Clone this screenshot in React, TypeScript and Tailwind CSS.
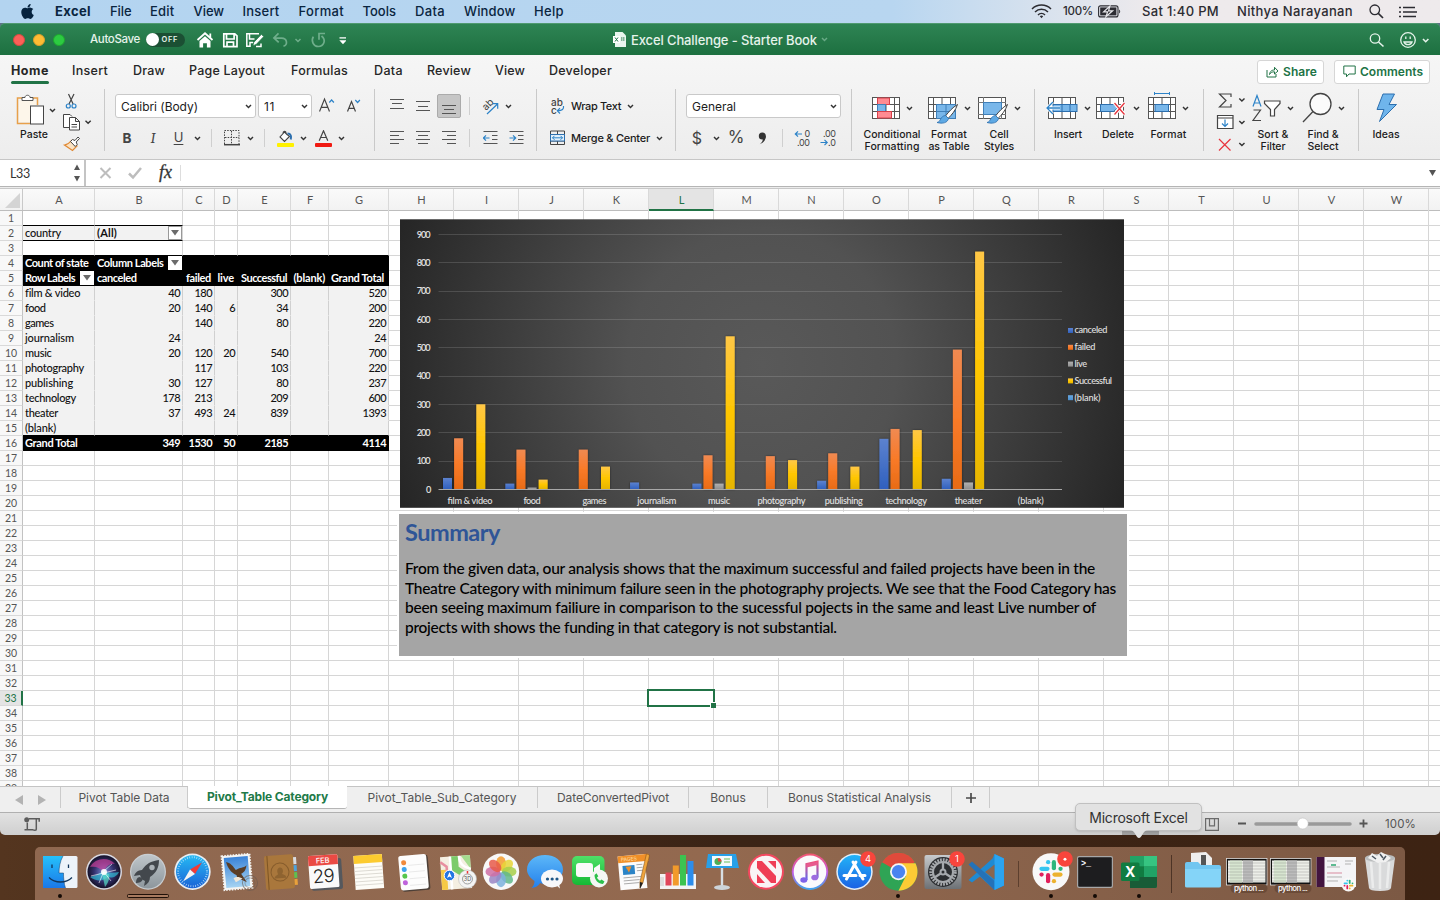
import { useLayoutEffect, useRef, useState, type ReactNode } from "react";
import { FaApple } from "react-icons/fa";

/* Text run tracked so that it fills a given width. */
function T({ w, className = "", children }: { w: number; className?: string; children: string }) {
  const ref = useRef<HTMLSpanElement>(null);
  const [ls, setLs] = useState(0);
  useLayoutEffect(() => {
    const el = ref.current;
    if (!el) return;
    el.style.letterSpacing = "0px";
    const next = (w - el.getBoundingClientRect().width) / children.length;
    el.style.letterSpacing = next + "px";
    setLs(next);
  }, [w, children]);
  return (
    <span ref={ref} className={"inline-block w-fit shrink-0 whitespace-pre " + className} style={{ letterSpacing: ls + "px" }}>
      {children}
    </span>
  );
}

const Chev = ({ className = "text-[#333]" }: { className?: string }) => (
  <svg className={"shrink-0 " + className} width="7" height="5" viewBox="0 0 7 5">
    <path d="M1 1l2.5 2.6L6 1" fill="none" stroke="currentColor" strokeWidth="1.4" />
  </svg>
);

const Slot = ({ className, children }: { className: string; children?: ReactNode }) => (
  <div className={"flex h-full shrink-0 items-center justify-center " + className}>{children}</div>
);

const Sep = () => <div className="mt-[3px] h-[62px] w-px shrink-0 bg-[#c9c9c9]" />;
const MiniSep = () => <div className="h-[18px] w-px shrink-0 bg-[#cfcfcf]" />;

/* ---------- Menu bar ---------- */
const menus: [string, number, string][] = [
  ["File", 21.5, "ml-[19px]"],
  ["Edit", 24.5, "ml-[18.5px]"],
  ["View", 30.5, "ml-[19px]"],
  ["Insert", 37, "ml-[18.5px]"],
  ["Format", 45.5, "ml-[19px]"],
  ["Tools", 33.5, "ml-[18.5px]"],
  ["Data", 30, "ml-[19px]"],
  ["Window", 51.5, "ml-[19px]"],
  ["Help", 30, "ml-[18.5px]"],
];

function MenuBar() {
  return (
    <div className="flex h-[23px] shrink-0 items-center bg-linear-to-r from-[#b3d4f0] via-[#b8d6f0] via-62% to-[#eeeaec] to-80% text-[13px] font-medium text-[#0a2540]">
      <FaApple className="mb-px ml-[19px] size-[17px] text-[#06233f]" />
      <T w={36} className="ml-[19px] font-bold">Excel</T>
      {menus.map(([m, w, c]) => (
        <T key={m} w={w} className={c}>{m}</T>
      ))}
      <div className="ml-auto flex items-center text-[#2c2c32]">
        <svg width="21" height="15" viewBox="0 0 21 15" fill="none" stroke="currentColor" strokeWidth="1.5">
          <path d="M1 5a13.5 13.5 0 0 1 19 0M4 8a9.3 9.3 0 0 1 13 0M7 11a5 5 0 0 1 7 0" />
          <path d="M8.8 12.2a2.5 2.5 0 0 1 3.4 0L10.5 14.2z" fill="currentColor" stroke="none" />
        </svg>
        <T w={30} className="ml-[11px] text-[11.5px]">100%</T>
        <svg className="ml-[5px]" width="23" height="13" viewBox="0 0 23 13">
          <rect x=".6" y=".9" width="19.4" height="11" rx="2" fill="none" stroke="currentColor" strokeWidth="1.1" />
          <rect x="2.2" y="2.4" width="16.2" height="8" fill="currentColor" />
          <path d="M21.2 4.4c1.3.6 1.3 3.4 0 4z" fill="currentColor" />
          <path d="M11.8 1.2L5.6 6.9h4l-1.6 4.7 6.6-5.8h-4z" fill="currentColor" stroke="#e8e8ec" strokeWidth="1.2" />
        </svg>
        <T w={77} className="ml-[21px]">Sat 1:40 PM</T>
        <T w={116} className="ml-[18px]">Nithya Narayanan</T>
        <svg className="ml-[16px]" width="15" height="15" viewBox="0 0 15 15" fill="none" stroke="currentColor" strokeWidth="1.3">
          <circle cx="5.8" cy="5.8" r="4.8" /><path d="M9.3 9.3l4.7 4.7" strokeWidth="1.7" />
        </svg>
        <svg className="mr-[23px] ml-[15px]" width="18" height="12" viewBox="0 0 18 12" stroke="currentColor" strokeWidth="1.7">
          <path d="M4 1.5h12M4 6h14M4 10.5h13M0 1.5h2M0 6h2M0 10.5h2" />
        </svg>
      </div>
    </div>
  );
}

/* ---------- Title bar ---------- */
function TitleBar() {
  return (
    <div className="flex h-8 shrink-0 items-center rounded-t-[5px] border-t border-[#4f9a70] bg-linear-to-b from-[#2e8454] to-[#1d7040] text-[#e6f3eb]">
      <div className="ml-[13px] flex gap-2">
        <i className="size-3 rounded-full border border-[#d9483f] bg-[#fc6058]" />
        <i className="size-3 rounded-full border border-[#dc9e2a] bg-[#fdbc34]" />
        <i className="size-3 rounded-full border border-[#1fa72f] bg-[#2ccb41]" />
      </div>
      <T w={50} className="ml-[25px] text-[11.5px] font-medium">AutoSave</T>
      <div className="ml-[6px] flex h-[14px] w-[39px] items-center rounded-full bg-[#1b4f33]">
        <span className="size-[12.5px] rounded-full bg-white" />
        <T w={16.5} className="ml-[3px] text-[7.5px] font-semibold">OFF</T>
      </div>
      <svg className="ml-[11px]" width="150" height="20" viewBox="196 29.500 150 20" fill="none" stroke="#fff" strokeWidth="1.5">
        <path d="M197.5 39.5l7.5-6.7 7.5 6.7M210.3 33v4" strokeWidth="1.8" />
        <path d="M199.5 40.6l5.5-4.8 5.5 4.8V47h-3.6v-4.3h-3.8V47h-3.6z" fill="#fff" stroke="none" />
        <path d="M223.8 33.3h11l2.2 2v10.9h-13.2zM226.5 33.5v5h7.6v-5M227 46v-4.3h6.5V46" strokeWidth="1.7" />
        <path d="M259 33.3h-12.2v12.4h4M249.5 33.5v5h5M250 46v-4h3M256 46h5v-3" strokeWidth="1.5" />
        <path d="M252.8 45.2l1-3.4 7.6-8 2.4 2.3-7.7 8z" fill="#fff" stroke="#25794a" strokeWidth=".8" />
        <g stroke="#6fae8b">
          <path d="M278.500 32.800l-4.600 4.700 4.800 4.300M274.300 37.600h7.300c6 0 6.300 7.400 1.900 8" strokeWidth="1.700" />
          <path d="M295.500 38.400l2.500 2.600 2.500-2.600" />
          <path d="M325 33h-6v6.300M313.300 36.200c-2.500 4.500.3 9.800 5 9.800 5.500 0 8.300-6.300 3.200-10.500" strokeWidth="1.700" />
        </g>
        <path d="M339.500 37.400h7" strokeWidth="1.300" />
        <path d="M339.300 39.800h7.400l-3.700 4z" fill="#fff" stroke="none" />
      </svg>
      <svg className="ml-[267px]" width="14" height="16" viewBox="0 0 14 16">
        <path d="M2 0h7.500L13 3.500V15H2z" fill="#e9f5ee" />
        <rect x="0" y="4" width="7" height="7" fill="#fff" />
        <path d="M2 5.500l3 4M5 5.500l-3 4M8 6h1.500M10 6h1.500M8 8h1.500M10 8h1.500" stroke="#217346" strokeWidth="1" />
      </svg>
      <T w={186} className="mt-[2px] ml-[4px] text-[13px] font-medium">Excel Challenge - Starter Book</T>
      <Chev className="ml-[4px] text-[#69aa86]" />
      <svg className="mr-[10px] ml-auto" width="62" height="18" viewBox="1368 30 62 18" fill="none" stroke="#e6f3eb" strokeWidth="1.300">
        <circle cx="1375" cy="37.500" r="4.700" /><path d="M1378.500 41l5 4.500" strokeWidth="1.600" />
        <circle cx="1408" cy="39" r="7.300" />
        <path d="M1404 41c1 3.500 7 3.500 8 0z M1405.800 35.500v2.500M1410.200 35.500v2.500" />
        <path d="M1423 38l2.700 2.700 2.700-2.700" strokeWidth="1.600" />
      </svg>
    </div>
  );
}

/* ---------- Ribbon ---------- */
const ribbonTabs: [string, number, string][] = [
  ["Insert", 36, "ml-[23px]"],
  ["Draw", 32, "ml-[25px]"],
  ["Page Layout", 76, "ml-[24px]"],
  ["Formulas", 57, "ml-[26px]"],
  ["Data", 29, "ml-[26px]"],
  ["Review", 44, "ml-[24px]"],
  ["View", 30, "ml-[24px]"],
  ["Developer", 63, "ml-[24px]"],
];

function RibbonTabs() {
  return (
    <div className="flex h-[31px] shrink-0 items-center pt-[2px] pl-[11px] text-[12.5px] font-medium text-[#262626]">
      <div className="relative">
        <T w={38} className="font-bold">Home</T>
        <span className="absolute top-[19px] left-0 h-[3px] w-[38px] rounded-full bg-[#217346]" />
      </div>
      {ribbonTabs.map(([t, w, c]) => (
        <T key={t} w={w} className={c}>{t}</T>
      ))}
      <div className="ml-auto flex gap-[10px] pr-[10px] text-[12px] font-semibold text-[#217346]">
        <div className="flex h-6 w-[67px] items-center rounded-[3px] border border-[#d6d6d6] bg-white pl-[8px]">
          <svg width="13" height="12" viewBox="0 0 13 12" fill="none" stroke="currentColor">
            <path d="M1 4v7h9V8M3.500 8.500C4 5 6 4 8.500 4V1.300L12 5 8.500 8V5.800C6 5.800 4.800 6.500 3.500 8.500z" />
          </svg>
          <T w={34} className="ml-[4px]">Share</T>
        </div>
        <div className="flex h-6 w-[96px] items-center rounded-[3px] border border-[#d6d6d6] bg-white pl-[8px]">
          <svg width="13" height="13" viewBox="0 0 13 13" fill="none" stroke="currentColor">
            <path d="M.8 1h11.400v8H6l-2.500 2.800V9H.8z" />
          </svg>
          <T w={63} className="ml-[4px]">Comments</T>
        </div>
      </div>
    </div>
  );
}

const Lines = ({ l, className = "" }: { l: [number, number, number][]; className?: string }) => (
  <svg className={className} width="14" height="16" viewBox="0 0 14 16" stroke="#555" strokeWidth="1" shapeRendering="crispEdges">
    {l.map(([a, b, y]) => <path key={y} d={`M${a} ${y + 0.5}H${b}`} />)}
  </svg>
);

function Big({ className, icon, lines, chev = true }: { className: string; icon: ReactNode; lines: [string, number][]; chev?: boolean }) {
  return (
    <div className={"flex shrink-0 flex-col items-center " + className}>
      <div className="flex h-[43px] items-center gap-[6px] pt-px">
        {icon}
        {chev && <Chev className="mt-px text-[#333]" />}
      </div>
      {lines.map(([s, w]) => (
        <T key={s} w={w} className="h-3 text-[10.500px] leading-[12px] font-medium text-[#1c1c1c]">{s}</T>
      ))}
    </div>
  );
}

const GridBase = () => (
  <g fill="#fff" stroke="#555" strokeWidth="1">
    <rect x=".5" y="5.500" width="27" height="21" />
    <path d="M0 12.500h28M0 19.500h28M5.500 5v22M14 5v22M22.500 5v22" />
  </g>
);
const Brush = () => (
  <g>
    <path d="M29.500 12.500c-5 3-9 7.500-12 11.500l2.500 2.500c4-4 7.500-8 9.500-14z" fill="#fff" stroke="#444" />
    <path d="M17.500 23.500l3 3c-1 4.500-6 5.500-11.500 4 4-.5 3-6.500 8.500-7z" fill="#5ea9e4" stroke="#2d6fae" strokeWidth=".8" />
  </g>
);

function Ribbon() {
  return (
    <div className="flex h-[74px] shrink-0 items-start border-b border-[#c6c6c6]">
      {/* clipboard */}
      <div className="flex w-[104px] shrink-0">
        <div className="ml-[16px] flex w-[44px] flex-col">
          <div className="flex h-[43px] items-center gap-[2px] pt-[5px]">
            <svg width="31" height="32" viewBox="0 0 31 32">
              <path d="M6 4H1.500v25.500H14M17 4h4.500v7" fill="none" stroke="#e8a04a" strokeWidth="1.500" />
              <path d="M3 6.500h17V11h-6v17H3z" fill="#fdf6ea" />
              <path d="M6 6.500V3.500h3C9 .5 14 .5 14 3.500h3v3z" fill="#fff" stroke="#555" />
              <rect x="14.500" y="12" width="13" height="18" fill="#fff" stroke="#444" />
            </svg>
            <Chev />
          </div>
          <T w={28} className="ml-[4px] text-[10.500px] leading-[12px] font-medium text-[#1c1c1c]">Paste</T>
        </div>
        <svg className="mt-[6px]" width="34" height="62" viewBox="60 92 34 62" fill="none">
          <path d="M68.500 94l4.600 10M74 94l-5 10" stroke="#444" strokeWidth="1.200" />
          <circle cx="68.300" cy="106" r="2" stroke="#2d83c8" strokeWidth="1.200" />
          <circle cx="74" cy="106" r="2" stroke="#2d83c8" strokeWidth="1.200" />
          <g stroke="#444" fill="#fff">
            <path d="M69.500 127.500h-6v-13h6.500l2 2" /><path d="M69.500 117.500h6l4 4v8.500h-10zM75.500 117.500v4h4M71.500 124.500h5.500M71.500 127h5.500" />
          </g>
          <path d="M85.500 120.700l2.600 2.600 2.600-2.600" stroke="#333" strokeWidth="1.400" />
          <path d="M71.500 140.500l5.500 5.500-4.500 4.500-8-5.500c3-.5 5-2 7-4.500z" fill="#fbe3c3" stroke="#e08a35" strokeWidth="1.200" />
          <path d="M70.500 141.500l2-2 2.500 1 3-3.500 1.500 1.500-3.300 3.500 1 2.500-2 2z" fill="#fff" stroke="#444" />
        </svg>
      </div>
      <Sep />
      {/* font */}
      <div className="flex w-[269px] shrink-0 flex-col pt-[8px] pl-[10px]">
        <div className="flex h-6 items-center text-[12px] text-[#1c1c1c]">
          <div className="flex h-6 w-[141px] items-center justify-between rounded-[3px] border border-[#c9c9c9] bg-white pt-px pr-[3px] pl-[5px]">
            <T w={77}>Calibri (Body)</T><Chev />
          </div>
          <div className="ml-[2px] flex h-6 w-[54px] items-center justify-between rounded-[3px] border border-[#c9c9c9] bg-white pt-px pr-[3px] pl-[5px]">
            <T w={11}>11</T><Chev />
          </div>
          <svg className="ml-[7px]" width="44" height="18" viewBox="319 96 44 18" fill="none" stroke="#444" strokeWidth="1.200">
            <path d="M319.500 110.500l5-12.500 5 12.500M321.300 106.300h6.400" /><path d="M329.300 101.500l2.300-2.500 2.300 2.500" stroke="#2d83c8" />
            <path d="M347.500 110.500l4-10 4 10M349 107.300h5.200" /><path d="M355.300 99l2.300 2.500 2.300-2.500" stroke="#2d83c8" />
          </svg>
        </div>
        <div className="mt-[8px] flex h-6 items-center text-[14px] text-[#444]">
          <Slot className="w-[24px] text-[13.500px] font-bold">B</Slot>
          <Slot className="w-[28px] font-serif text-[15px] italic">I</Slot>
          <Slot className="w-[23px] text-[13px] underline underline-offset-2">U</Slot>
          <Slot className="w-[14px]"><Chev /></Slot>
          <Slot className="w-[14px]"><MiniSep /></Slot>
          <Slot className="w-[27px]">
            <svg width="16" height="16" viewBox="0 0 16 16" fill="none" stroke="#444">
              <path d="M.5 14V.5h14.500V14M7.500 1v13M1 7.500h14" strokeDasharray="1.500 1.200" /><path d="M0 14.700h16" strokeWidth="1.500" />
            </svg>
          </Slot>
          <Slot className="w-[11px]"><Chev /></Slot>
          <Slot className="w-[17px]"><MiniSep /></Slot>
          <Slot className="w-[24px]">
            <svg width="17" height="17" viewBox="0 0 17 17" fill="none">
              <path d="M7.500 2L3 7l4.500 4.500 5-5zM7.500 2l3 3M6 3.500c0-3 3-3 3-.5" stroke="#444" strokeWidth="1.100" fill="#fff" />
              <path d="M10.500 3.500c3.500 0 4 3 3.200 6" stroke="#2d6fae" strokeWidth="2" />
              <rect x="0" y="13" width="17" height="4" rx="1" fill="#fff100" />
            </svg>
          </Slot>
          <Slot className="w-[12px]"><Chev /></Slot>
          <Slot className="w-[28px]">
            <svg width="17" height="17" viewBox="0 0 17 17" fill="none">
              <path d="M4.200 10.800L8.500.8l4.300 10M5.600 7.500h5.800" stroke="#444" strokeWidth="1.200" /><rect x="0" y="13" width="17" height="4" rx="1" fill="#f01a12" />
            </svg>
          </Slot>
          <Slot className="w-[9px]"><Chev /></Slot>
        </div>
      </div>
      <Sep />
      {/* alignment */}
      <div className="flex w-[161px] shrink-0 flex-col pt-[8px] pl-[10px]">
        <div className="flex h-6 items-center">
          <Slot className="w-[24px]"><Lines l={[[0, 14, 2], [2, 12, 6], [0, 14, 11]]} className="mb-[2px]" /></Slot>
          <Slot className="w-[28px]"><Lines l={[[0, 14, 3], [2, 12, 8], [0, 14, 12]]} /></Slot>
          <Slot className="w-[24px] rounded-[2px] border border-[#ababab] bg-[#c6c6c6]"><Lines l={[[0, 14, 4], [2, 12, 8], [0, 14, 12]]} className="mt-[5px]" /></Slot>
          <Slot className="w-[16px]"><MiniSep /></Slot>
          <Slot className="w-[25px]">
            <svg width="16" height="18" viewBox="482 96 16 18" fill="none" className="overflow-visible">
              <text x="482" y="107.500" fontSize="10" fontFamily="Inter" fill="#444" transform="rotate(-45 487 104)">ab</text>
              <path d="M487 113L497.500 103M492.500 102.700h5.200v5" stroke="#2d83c8" strokeWidth="1.200" />
            </svg>
          </Slot>
          <Slot className="w-[12px]"><Chev /></Slot>
        </div>
        <div className="mt-[8px] flex h-6 items-center">
          <Slot className="w-[24px]"><Lines l={[[0, 14, 1], [0, 9, 5], [0, 14, 9], [0, 9, 13]]} /></Slot>
          <Slot className="w-[28px]"><Lines l={[[0, 14, 1], [2, 12, 5], [0, 14, 9], [2, 12, 13]]} /></Slot>
          <Slot className="w-[24px]"><Lines l={[[0, 14, 1], [5, 14, 5], [0, 14, 9], [5, 14, 13]]} /></Slot>
          <Slot className="w-[16px]"><MiniSep /></Slot>
          {["M6 8H0M2.500 5.300L-.2 8l2.700 2.700", "M0 8h6M3.500 5.300L6.200 8l-2.700 2.700"].map((d) => (
            <Slot key={d} className="w-[26px]">
              <svg width="15" height="16" viewBox="-.5 0 15 16" fill="none" stroke="#555">
                <path d="M0 1.500h14M8.500 5.500H14M8.500 9.500H14M0 13.500h14" /><path d={d} stroke="#2d83c8" strokeWidth="1.200" />
              </svg>
            </Slot>
          ))}
        </div>
      </div>
      <Sep />
      {/* wrap / merge */}
      <div className="flex w-[138px] shrink-0 flex-col pt-[8px] pl-[13px] text-[11px] font-medium text-[#1c1c1c]">
        <div className="flex h-6 items-center">
          <svg width="15" height="18" viewBox="0 0 15 18" fill="none" className="overflow-visible">
            <text x="1" y="8.500" fontSize="10" fontFamily="Inter" fill="#444" textLength="12">ab</text>
            <text x="1" y="17" fontSize="10" fontFamily="Inter" fill="#444">c</text>
            <path d="M13.500 9c.5 3-1 4.800-6 4.800M10 11.100l-2.700 2.700L10 16.500" stroke="#2d83c8" strokeWidth="1.200" />
          </svg>
          <T w={50} className="mt-px ml-[6px]">Wrap Text</T>
          <Chev className="ml-[6px] text-[#333]" />
        </div>
        <div className="mt-[8px] flex h-6 items-center">
          <svg width="15" height="16" viewBox="0 0 15 16" fill="none">
            <path d="M.5 1h14v13.500H.5zM0 4.500h15M0 11h15M7.500 1v3M7.500 11v3" stroke="#444" />
            <rect x=".5" y="4.500" width="14" height="6.500" fill="#e2f0fb" stroke="#2d6fae" />
            <path d="M2.500 7.800h10M4.500 5.800l-2 2 2 2M10.500 5.800l2 2-2 2" stroke="#2d83c8" />
          </svg>
          <T w={79} className="mt-px ml-[6px]">Merge &amp; Center</T>
          <Chev className="ml-[6px] text-[#333]" />
        </div>
      </div>
      <Sep />
      {/* number */}
      <div className="flex w-[175px] shrink-0 flex-col pt-[8px] pl-[10px]">
        <div className="flex h-6 w-[155px] items-center justify-between rounded-[3px] border border-[#c9c9c9] bg-white pt-px pr-[3px] pl-[5px] text-[12px] text-[#1c1c1c]">
          <T w={44}>General</T><Chev />
        </div>
        <div className="mt-[8px] flex h-6 items-center text-[16px] text-[#444]">
          <Slot className="w-[22px]">$</Slot>
          <Slot className="w-[16px]"><Chev /></Slot>
          <Slot className="w-[24px] text-[17px]">%</Slot>
          <Slot className="w-[28px]">
            <svg width="9" height="13" viewBox="0 0 9 13"><circle cx="4.300" cy="3.900" r="3.500" fill="#333" /><path d="M7.800 3.500c.3 4-2 7.300-6 8.700 2.500-2.200 3-3.500 3-5.500z" fill="#333" /></svg>
          </Slot>
          <Slot className="w-[13px]"><MiniSep /></Slot>
          <Slot className="w-[27px]">
            <svg width="17" height="18" viewBox="0 0 17 18" fontSize="9" fontFamily="Inter" fill="#444" className="overflow-visible">
              <text x="10.500" y="8">0</text><text x="3" y="16.500" textLength="13">.00</text>
              <path d="M8 5H1.500M4 2.300L1.300 5 4 7.700" fill="none" stroke="#2d83c8" strokeWidth="1.200" />
            </svg>
          </Slot>
          <Slot className="w-[25px]">
            <svg width="17" height="18" viewBox="0 0 17 18" fontSize="9" fontFamily="Inter" fill="#444" className="overflow-visible">
              <text x="3" y="8" textLength="13">.00</text><text x="8" y="16.500" textLength="8">.0</text>
              <path d="M.5 13.500H7M4.500 10.800l2.700 2.700-2.700 2.700" fill="none" stroke="#2d83c8" strokeWidth="1.200" />
            </svg>
          </Slot>
        </div>
      </div>
      <Sep />
      {/* styles */}
      <div className="flex w-[182px] shrink-0 pl-[10px]">
        <Big className="w-[60px]" lines={[["Conditional", 57], ["Formatting", 55]]} icon={
          <svg width="28" height="32" viewBox="0 0 28 32"><GridBase />
            <rect x="5.500" y="6" width="12" height="6.500" fill="#ff8b92" stroke="#d8404a" /><rect x="5.500" y="12.500" width="8" height="7" fill="#79b7ea" stroke="#3f7fb8" /><rect x="5.500" y="19.500" width="14" height="6.500" fill="#ff8b92" stroke="#d8404a" />
          </svg>} />
        <Big className="w-[54px]" lines={[["Format", 36], ["as Table", 41]]} icon={
          <svg width="30" height="32" viewBox="0 0 30 32"><GridBase /><path d="M8.500 12.500h19v14h-19z" fill="#79b7ea" stroke="#3f7fb8" /><path d="M9 19.500h18M18 13v13" stroke="#3f7fb8" /><Brush /></svg>} />
        <Big className="w-[46px]" lines={[["Cell", 19], ["Styles", 30]]} icon={
          <svg width="30" height="32" viewBox="0 0 30 32"><rect x=".5" y="5.500" width="27" height="21" fill="#fff" stroke="#555" /><path d="M0 10.500h28M0 22.500h28M5.500 5v22M23.500 5v22" stroke="#777" /><rect x="5.500" y="10.500" width="18" height="12" fill="#79b7ea" stroke="#3f7fb8" /><Brush /></svg>} />
      </div>
      <Sep />
      {/* cells */}
      <div className="flex w-[168px] shrink-0 pl-[8px]">
        <Big className="w-[50px]" lines={[["Insert", 28]]} icon={
          <svg width="32" height="32" viewBox="-2 0 32 32"><GridBase /><rect x="5" y="12.500" width="24" height="7" fill="#79b7ea" stroke="#2d6fae" /><path d="M14 12.500v7M22 12.500v7" stroke="#2d6fae" /><path d="M12 16H-1M5 10l-6 6 6 6" fill="none" stroke="#fff" strokeWidth="3" /><path d="M12 16H-1M5 10l-6 6 6 6" fill="none" stroke="#2d83c8" strokeWidth="1.300" /></svg>} />
        <Big className="w-[50px]" lines={[["Delete", 32]]} icon={
          <svg width="31" height="32" viewBox="0 0 31 32"><GridBase /><path d="M4.500 12.500h13l4 3.500-4 3.500h-13z" fill="#79b7ea" stroke="#2d6fae" /><path d="M18.500 11l10 11.500M28.500 11l-10 11.500" stroke="#fff" strokeWidth="3.500" /><path d="M18.500 11l10 11.500M28.500 11l-10 11.500" stroke="#e8353e" strokeWidth="1.300" /></svg>} />
        <Big className="w-[51px]" lines={[["Format", 36]]} icon={
          <svg width="28" height="32" viewBox="0 0 28 32"><GridBase /><rect x="7" y="12.500" width="13.500" height="7" fill="#79b7ea" stroke="#2d6fae" /><path d="M6.500 1.500h15M6.500 0v3M21.500 0v3" stroke="#2d83c8" /></svg>} />
      </div>
      <Sep />
      {/* editing */}
      <div className="flex w-[154px] shrink-0">
        <svg className="mt-[5px] ml-[9px]" width="36" height="64" viewBox="1213 91 36 64" fill="none" stroke="#444" strokeWidth="1.200">
          <path d="M1231 97v-3h-11.500l6.500 6.500-6.500 6.500h11.500v-3" />
          <path d="M1217.500 115.500h15.500v13h-15.500zM1217.500 118h15.500" fill="#fff" />
          <path d="M1225 119.500v7M1222 123.500l3 3 3-3" stroke="#2d83c8" />
          <path d="M1219 139l11.500 11.500M1230.500 139l-11.500 11.500" stroke="#e8353e" />
          <path d="M1239.300 98.500l2.600 2.600 2.600-2.600M1239.300 121l2.600 2.600 2.600-2.600M1239.300 143l2.600 2.600 2.600-2.600" stroke="#333" strokeWidth="1.400" />
        </svg>
        <Big className="w-[48px]" lines={[["Sort &", 31], ["Filter", 25]]} icon={
          <svg width="29" height="30" viewBox="0 0 29 30" fill="none" strokeWidth="1.200">
            <path d="M1 13.500L5 2.500l4 11M2.500 10h5" stroke="#2d83c8" /><path d="M1.500 17h7L1 27.500h8" stroke="#444" />
            <path d="M12.500 8h15.500v2.500l-5.500 6V23h-4v-6.500l-6-6z" fill="#fff" stroke="#444" />
          </svg>} />
        <Big className="w-[52px]" lines={[["Find &", 31], ["Select", 31]]} icon={
          <svg width="30" height="32" viewBox="0 0 30 32" fill="none" stroke="#444" strokeWidth="1.300"><circle cx="18.500" cy="12" r="10.500" fill="#fbfbfb" /><path d="M11 19.500L1 30" /></svg>} />
      </div>
      <Sep />
      <Big className="w-[54px]" chev={false} lines={[["Ideas", 27]]} icon={
        <svg width="23" height="30" viewBox="0 0 23 30"><path d="M8 1h11.500l-5.500 10.500h7.500L4.500 28.500l4.500-12H2z" fill="#6fb5ec" stroke="#2d6fae" /></svg>} />
    </div>
  );
}

function FormulaBar() {
  return (
    <div className="flex h-[29px] shrink-0 flex-col border-b border-[#c8c8c8] bg-[#ececec]">
      <div className="flex h-[27px] items-center border-b border-[#b5b5b5] bg-white text-[#333]">
        <div className="flex h-full w-[86px] items-center justify-between border-r-2 border-[#c4c4c4] pr-[3px] pl-[10px]">
          <T w={20} className="mt-[2px] font-['Lato'] text-[12.500px]">L33</T>
          <svg width="8" height="18" viewBox="0 0 8 18" fill="#555"><path d="M1 6l3-5.500L7 6zM1 12l3 5.500L7 12z" /></svg>
        </div>
        <svg className="ml-[12px]" width="90" height="20" viewBox="98 164 90 20" fill="none" stroke="#bdbdbd" strokeWidth="2">
          <path d="M100.500 169l10 10M110.500 169l-10 10" /><path d="M129 174.500l4 4 8-9.500" strokeWidth="2.500" /><path d="M180.500 166v16" stroke="#ddd" strokeWidth="1" />
          <text x="159" y="179" fontFamily="Liberation Serif" fontStyle="italic" fontSize="18" fill="#333" stroke="#333" strokeWidth=".3" textLength="13">fx</text>
        </svg>
        <svg className="mr-[4px] ml-auto" width="7" height="6" viewBox="0 0 7 6"><path d="M0 0h7L3.500 6z" fill="#555" /></svg>
      </div>
    </div>
  );
}

/* ---------- Sheet ---------- */
const cols: [string, string][] = [
  ["A", "w-[72px]"], ["B", "w-[88px]"], ["C", "w-[32px]"], ["D", "w-[23px]"], ["E", "w-[53px]"], ["F", "w-[38px]"], ["G", "w-[60px]"],
  ..."HIJKLMNOPQRSTUVW".split("").map((c): [string, string] => [c, "w-[65px]"]),
  ["", "w-[65px]"],
];

type Item = [string, number] | null;
const header: Record<number, Item[]> = {
  2: [["country", 36], ["(All)", 20]],
  4: [["Count of state", 63.5], ["Column Labels", 66.500]],
  5: [["Row Labels", 50], ["canceled", 39.500], ["failed", 25], ["live", 16.500], ["Successful", 46], ["(blank)", 31.500], ["Grand Total", 53]],
};
const data: Record<number, [string, number, string[]]> = {
  6: ["film & video", 55, ["40", "180", "", "300", "", "520"]],
  7: ["food", 20.500, ["20", "140", "6", "34", "", "200"]],
  8: ["games", 28.500, ["", "140", "", "80", "", "220"]],
  9: ["journalism", 49, ["24", "", "", "", "", "24"]],
  10: ["music", 26.500, ["20", "120", "20", "540", "", "700"]],
  11: ["photography", 59, ["", "117", "", "103", "", "220"]],
  12: ["publishing", 48, ["30", "127", "", "80", "", "237"]],
  13: ["technology", 51, ["178", "213", "", "209", "", "600"]],
  14: ["theater", 33, ["37", "493", "24", "839", "", "1393"]],
  15: ["(blank)", 31, ["", "", "", "", "", ""]],
  16: ["Grand Total", 52.500, ["349", "1530", "50", "2185", "", "4114"]],
};
const drops: Record<string, boolean> = { "2-1": true, "4-1": true, "5-0": true };

const Drop = ({ boxed }: { boxed: boolean }) => (
  <span className={"flex size-[14px] shrink-0 items-center justify-center border bg-white " + (boxed ? "border-[#999]" : "border-white")}>
    <svg width="8" height="6" viewBox="0 0 8 6"><path d="M0 0h8L4 5.500z" fill="#6b6b6b" /></svg>
  </span>
);

function Cell({ r, c, w }: { r: number; c: number; w: string }) {
  const pivot = c < 7;
  const black = pivot && (r === 4 || r === 5 || r === 16);
  const shade = pivot && r >= 6 && r <= 15;
  const filt = r === 2 && c < 2;
  let tone = "border-[#d6d6d6]";
  if (black) tone = "border-black bg-black font-bold text-white";
  else if (shade) tone = r === 15 ? "border-r-[#d0d0d0] border-b-black bg-[#f2f2f2]" : "border-r-[#d0d0d0] border-b-[#f2f2f2] bg-[#f2f2f2]";
  else if (filt) tone = "border-r-[#d6d6d6] border-b-black bg-[#f2f2f2]" + (c === 1 ? " font-bold" : "");
  else if (r === 1 && c < 2) tone = "border-r-[#d6d6d6] border-b-black";
  else if (r === 3 && pivot) tone = "border-r-[#d6d6d6] border-b-black";
  let body: ReactNode = null;
  const h = header[r]?.[c];
  const d = pivot ? data[r] : undefined;
  const right = (d && c > 0) || (r === 5 && c > 1);
  if (h) body = <T w={h[1]}>{h[0]}</T>;
  else if (d) body = c === 0 ? <T w={d[1]}>{d[0]}</T> : d[2][c - 1] ? <T w={d[2][c - 1].length * 5.85}>{d[2][c - 1]}</T> : null;
  return (
    <div className={`flex h-[15px] shrink-0 items-center border-r border-b pl-[2px] leading-[14px] ${w} ${tone} ${right ? "justify-end " + (r === 5 ? (c === 6 ? "pr-[4px]" : "pr-[3px]") : "pr-[2px]") : "justify-between"}`}>
      {body}
      {drops[`${r}-${c}`] && <Drop boxed={r === 2} />}
    </div>
  );
}

const cats = ["film & video", "food", "games", "journalism", "music", "photography", "publishing", "technology", "theater", "(blank)"];
const catW = [45, 17, 24, 39, 22, 48, 38, 41.500, 27.500, 26];
const vals = [[40, 180, 0, 300], [20, 140, 6, 34], [0, 140, 0, 80], [24, 0, 0, 0], [20, 120, 20, 540], [0, 117, 0, 103], [30, 127, 0, 80], [178, 213, 0, 209], [37, 493, 24, 839]];
const legend: [string, number][] = [["canceled", 33], ["failed", 21], ["live", 12.500], ["Successful", 37.500], ["(blank)", 26]];
const seriesTones = [["#5c82cf", "#2f60be"], ["#f08a52", "#e86b16"], ["#b0b0b0", "#8f8f8f"], ["#ffc746", "#e6b500"], ["#69a7df", "#4a90d0"]];

function Chart() {
  return (
    <svg className="absolute top-[8px] left-[400px]" width="724" height="289" viewBox="400 219 724 289" fontFamily="Lato" fontSize="9.200" fill="#e2e2e2">
      <defs>
        <radialGradient id="bg" gradientUnits="userSpaceOnUse" cx="762" cy="364" r="385">
          <stop offset="0" stopColor="#595959" /><stop offset=".35" stopColor="#525252" /><stop offset="1" stopColor="#262626" />
        </radialGradient>
        {seriesTones.map(([a, b], i) => (
          <linearGradient key={i} id={"s" + i} x1="0" y1="0" x2="0" y2="1">
            <stop offset="0" stopColor={a} />{i === 3 && <stop offset=".5" stopColor="#ffc600" />}{i === 1 && <stop offset=".5" stopColor="#f87a28" />}<stop offset="1" stopColor={b} />
          </linearGradient>
        ))}
        <filter id="sh" x="-50%" y="-10%" width="200%" height="120%"><feDropShadow dx="0" dy="0" stdDeviation="1" floodOpacity=".5" /></filter>
      </defs>
      <rect x="400" y="219.300" width="724" height="288.500" fill="url(#bg)" />
      {Array.from({ length: 10 }, (_, i) => {
        const y = 489.500 - i * 28.330;
        const s = String(i * 100);
        const w = s.length * 4.600;
        return (
          <g key={i}>
            {i > 0 && <path d={`M438.500 ${Math.floor(y) + 0.500}H1062`} stroke="#fff" strokeOpacity=".14" />}
            <text x={430.500 - w} y={y + 3} textLength={w} fontWeight="600">{s}</text>
          </g>
        );
      })}
      {vals.map((v, i) => v.map((n, j) => n > 0 && (
        <rect key={i + "-" + j} x={443 + i * 62.350 + j * 11.100} y={489.300 - n * 0.28330} width="9" height={n * 0.28330} fill={`url(#s${j})`} filter="url(#sh)" />
      )))}
      <path d="M438.500 489.500H1062" stroke="#a8a8a8" />
      {cats.map((c, i) => <text key={c} x={469.700 + i * 62.350 - catW[i] / 2} y="504" textLength={catW[i]} fontWeight="500">{c}</text>)}
      {legend.map(([s, w], i) => (
        <g key={s}>
          <rect x="1068" y={328 + i * 16.800} width="5" height="5" fill={`url(#s${i})`} />
          <text x="1074.500" y={333.300 + i * 16.800} textLength={w} fontWeight="500">{s}</text>
        </g>
      ))}
    </svg>
  );
}

function Sheet() {
  return (
    <div className="flex h-[597px] shrink-0 flex-col overflow-hidden bg-white font-['Lato']">
      <div className="flex h-[22px] shrink-0 border-b border-[#bdbdbd] bg-linear-to-b from-[#fafafa] to-[#f2f2f2] text-[11px] text-[#555]">
        <div className="flex w-[23px] shrink-0 items-end justify-end border-r border-[#c9c9c9] p-[2px]">
          <svg width="15" height="15" viewBox="0 0 15 15"><path d="M15 0v15H0z" fill="#d4d4d4" /></svg>
        </div>
        {cols.map(([c, w]) => (
          <div key={c} className={`flex h-[22px] shrink-0 justify-center border-r border-[#d9d9d9] pt-[3px] pl-px leading-[16px] ${w} ${c === "L" ? "border-b-2 border-b-[#217346] bg-[#e4e4e4] text-[#217346]" : ""}`}>{c}</div>
        ))}
      </div>
      <div className="relative flex flex-col text-[11px] font-medium text-[#111]">
        {Array.from({ length: 39 }, (_, i) => i + 1).map((r) => (
          <div key={r} className="flex h-[15px] shrink-0">
            <div className={"flex h-[15px] w-[23px] shrink-0 items-center justify-center border-b border-b-[#d9d9d9] pt-px text-[10.500px] font-normal " + (r === 33 ? "border-r-2 border-r-[#217346] bg-[#e4e4e4] text-[#217346]" : "border-r border-r-[#c2c2c2] bg-[#f8f8f8] text-[#555]")}>{r}</div>
            {cols.map(([c, w], i) => <Cell key={c} r={r} c={i} w={w} />)}
          </div>
        ))}
        <Chart />
        <div className="absolute top-[303px] left-[399px] flex h-[142px] w-[728px] flex-col bg-[#a5a5a5] pt-[3px] pl-[6px] outline-2 outline-white">
          <T w={95} className="text-[23.500px] leading-[30px] font-bold text-[#2f5597]">Summary</T>
          <div className="mt-[12px] flex flex-col text-[15.500px] leading-[19.700px] font-medium text-black">
            <T w={690}>From the given data, our analysis shows that the maximum successful and failed projects have been in the</T>
            <T w={711}>Theatre Category with minimum failure seen in the photography projects. We see that the Food Category has</T>
            <T w={691}>been seeing maximum failiure in comparison to the sucessful pojects in the same and least Live number of</T>
            <T w={432}>projects with shows the funding in that category is not substantial.</T>
          </div>
        </div>
        <div className="absolute top-[478px] left-[647px] h-[18px] w-[68px] border-2 border-[#217346]">
          <span className="absolute -right-[3px] -bottom-[3px] size-[6px] border-t border-l border-white bg-[#217346]" />
        </div>
      </div>
    </div>
  );
}

/* ---------- Sheet tabs and status bar ---------- */
function Tabs() {
  const tab = "flex h-[21px] shrink-0 items-center justify-center border-r border-[#cbcbcb] ";
  return (
    <div className="flex h-[26px] shrink-0 items-start border-t border-[#c4c4c4] bg-[#efefef] text-[12px] text-[#555]">
      <div className={tab + "w-[61px] gap-[15px] pt-[4px]"}>
        <svg width="8" height="10" viewBox="0 0 8 10"><path d="M8 0v10L0 5z" fill="#b3b3b3" /></svg>
        <svg width="8" height="10" viewBox="0 0 8 10"><path d="M0 0v10l8-5z" fill="#b3b3b3" /></svg>
      </div>
      <div className={tab + "w-[127px]"}><T w={91}>Pivot Table Data</T></div>
      <div className="-mt-px flex h-[23px] w-[159px] shrink-0 items-center justify-center rounded-b-[3px] border-b border-[#b5b5b5] bg-white font-bold text-[#217a48]"><T w={121}>Pivot_Table Category</T></div>
      <div className={tab + "w-[191px]"}><T w={149}>Pivot_Table_Sub_Category</T></div>
      <div className={tab + "w-[151px]"}><T w={112}>DateConvertedPivot</T></div>
      <div className={tab + "w-[79px]"}><T w={35.500}>Bonus</T></div>
      <div className={tab + "w-[184px]"}><T w={143}>Bonus Statistical Analysis</T></div>
      <div className={tab + "w-[38px]"}>
        <svg width="10" height="10" viewBox="0 0 10 10"><path d="M5 0v10M0 5h10" stroke="#4a4a4a" strokeWidth="1.700" /></svg>
      </div>
    </div>
  );
}

function StatusBar() {
  return (
    <div className="relative flex h-[23px] shrink-0 items-center rounded-b-[5px] border-t border-[#b0b0b0] bg-linear-to-b from-[#e2e2e2] to-[#cfcfcf]">
      <svg className="ml-[24px]" width="16" height="15" viewBox="0 0 16 15" fill="none" stroke="#5c5c5c" strokeWidth="1.500">
        <circle cx="2.700" cy="2.800" r="2.500" fill="#5c5c5c" stroke="none" /><path d="M5 1.700h10.200v3M3.300 5.500v7M.5 12.700h8M12.300 2v10.200c0 1.500-3.500 1.500-3.800 0" />
      </svg>
      <div className="ml-auto flex items-center">
        <svg width="14" height="13" viewBox="0 0 14 13" fill="none" stroke="#6a6a6a" strokeWidth="1.200"><path d="M.6.6h12.800v11.800H.6zM4.500.6v7.200h5V.6" /></svg>
        <svg className="ml-[19px]" width="130" height="14" viewBox="1238 817 130 14">
          <path d="M1238 823.500h8M1359.500 823.500h8M1363.500 819.500v8" stroke="#555" strokeWidth="1.800" />
          <path d="M1256 824h94" stroke="#9a9a9a" strokeWidth="3.500" strokeLinecap="round" />
          <circle cx="1302.700" cy="823.500" r="5.500" fill="#fff" stroke="#bbb" strokeWidth=".5" />
        </svg>
        <T w={31} className="mt-px mr-[24px] ml-[17px] text-[11.500px] text-[#555]">100%</T>
      </div>
      <span className="absolute right-[281px] bottom-0 h-[6px] w-[37px] bg-[#a0a0a0]" />
      <div className="absolute -top-[10px] left-[1075px] z-10 flex h-[28px] w-[127px] items-center justify-center rounded-[5px] border border-[#c0c0c0] bg-[#e2e2e2] text-[14px] text-[#333] shadow-sm">
        <T w={98.500}>Microsoft Excel</T>
        <svg className="absolute top-[26px] left-[54px]" width="18" height="9" viewBox="0 0 18 9"><path d="M0 0h18c-5 0-6 8-9 8S5 0 0 0z" fill="#e2e2e2" /></svg>
      </div>
    </div>
  );
}

/* ---------- Dock ---------- */
const petals: [number, string][] = [[0, "#f59b2d"], [45, "#e8d63a"], [90, "#a8cf49"], [135, "#62b98a"], [180, "#7db2dd"], [225, "#9a86c4"], [270, "#cf6fa5"], [315, "#e85a4a"]];

const SlackMark = () => (
  <g strokeWidth="4.200" strokeLinecap="round" fill="none">
    <path d="M-9.500-2.900h6" stroke="#36c5f0" /><path d="M-2.900-9.500h.1" stroke="#36c5f0" />
    <path d="M2.900-9.500v6" stroke="#2eb67d" /><path d="M9.500-2.900h.1" stroke="#2eb67d" />
    <path d="M3.500 2.900h6" stroke="#ecb22e" /><path d="M2.900 9.500h.1" stroke="#ecb22e" />
    <path d="M-2.900 3.500v6" stroke="#e01e5a" /><path d="M-9.500 2.900h.1" stroke="#e01e5a" />
  </g>
);
const Badge = ({ n }: { n: string }) => (
  <g><circle cx="36" cy="12" r="7.800" fill="#f8453c" />{n === "•" ? <circle cx="36" cy="12.300" r="1.500" fill="#fff" /> : <text x="36" y="15.500" textAnchor="middle" fontSize="9.500" fill="#fff" fontFamily="Inter">{n}</text>}</g>
);
const Sheetlet = () => (
  <g>
    <rect x="1.500" y="11.500" width="40.500" height="26.500" fill="#111" stroke="#ddd" strokeWidth=".8" />
    <rect x="3" y="13.500" width="37.500" height="22" fill="#eceee8" /><rect x="5" y="13.500" width="12" height="22" fill="#d7e5d0" /><rect x="18" y="13.500" width="10" height="22" fill="#bcbcbc" />
    <path d="M3 16h37.500M3 19h37.500M3 22h37.500M3 25h37.500M3 28h37.500M3 31h37.500M3 34h37.500" stroke="#777" strokeOpacity=".45" strokeWidth=".7" />
    <rect x="5.500" y="37" width="37" height="9" rx="4.500" fill="#6b4b38" />
    <text x="9" y="44.300" fontSize="7.800" fontFamily="Inter" fontWeight="500" fill="#fff" textLength="30">python ...</text>
  </g>
);

const left: ReactNode[] = [
  <g key="finder"><rect x="5" y="9" width="34.500" height="32" rx="1.500" fill="#edf3fa" /><path d="M5 9h20c-3 5-4 12-4 17h4.500c0 5 .5 11 2 15H5z" fill="url(#fi)" /><path d="M25 9c-3 5-4 12-4 17h4.500c0 5 .5 11 2 15" fill="none" stroke="#123b66" strokeWidth=".5" /><path d="M14 17.500v3.500M30.500 17.500v3.500M11 30.500c6 6 17 6 23 0" stroke="#12355b" strokeWidth="1.300" fill="none" /></g>,
  <g key="siri"><circle cx="22" cy="24.700" r="18" fill="#d9d9e2" /><circle cx="22" cy="24.700" r="16.500" fill="url(#si)" /><path d="M8 20c5-9 18-11 25-3-6-1-9 3-11 8-4-4-8-6-14-5z" fill="#c8409a" opacity=".7" /><path d="M8 30c5-1 9-3 13-6 5 2 10 2 16 1-3 6-8 6-11 5-6 5-12 4-18 0z" fill="#32c6dd" opacity=".65" /><path d="M20 26l3 14c3-4 5-8 4-13z" fill="#58e0c8" opacity=".7" /><path d="M9 29l25-6M17 36l5-12 8-7M22 25l7 9" stroke="#fff" opacity=".6" fill="none" /><circle cx="22" cy="25" r="3" fill="#fff" opacity=".9" /></g>,
  <g key="launch"><circle cx="22" cy="24.700" r="18" fill="#c9ced2" /><circle cx="22" cy="24.700" r="16.800" fill="url(#la)" /><path d="M33 13c-8 1-13 4-17 10-4 0-7 3-8 6l6-1c1 3 2 5 5 6l-1 5c4-2 6-5 6-9 6-4 9-9 9-17z" fill="#43484d" /><circle cx="26" cy="20.500" r="2.700" fill="#aab1b6" /><path d="M14 30c-3 0-4 3-4 6 3 0 6-1 7-4z" fill="#43484d" /></g>,
  <g key="safari"><circle cx="22.500" cy="24.700" r="18.200" fill="#e9eef3" /><circle cx="22.500" cy="24.700" r="16.500" fill="url(#sa)" /><circle cx="22.500" cy="24.700" r="14.500" fill="none" stroke="#cdeafc" strokeWidth="2" strokeDasharray=".6 1.800" /><path d="M32 15.500L25 27l-5-4.500z" fill="#f23b36" /><path d="M13 34.500l7-12 5 4.500z" fill="#f4f4f4" /></g>,
  <g key="mail" transform="rotate(-5 22 25)"><rect x="8" y="8" width="28" height="34" fill="#f4f4f2" stroke="#f4f4f2" strokeWidth="2" strokeDasharray="1.500 1.300" /><rect x="10" y="10" width="24" height="30" fill="url(#ml)" /><path d="M12 14c4 1 7 5 9 9 4-3 8-1 11-4-1 5-3 7-6 8l5 9-7-4-4-1c2-1 2-2 1-3-5-3-8-8-9-14z" fill="#5a3d26" /><path d="M18 31c3-2 6-1 9 1l-7 3z" fill="#efe6d8" /><circle cx="34" cy="37" r="7.500" fill="none" stroke="#6a5a50" opacity=".6" /><circle cx="34" cy="37" r="5" fill="none" stroke="#6a5a50" opacity=".4" /></g>,
  <g key="contacts" transform="rotate(-4 22 25)"><path d="M34 11h4v7h-4z" fill="#d8dbe0" /><path d="M34 19h4v6h-4z" fill="#4ea3dc" /><path d="M34 26h4v6h-4z" fill="#5fbf50" /><path d="M34 33h4v6h-4z" fill="#e9a13b" /><rect x="6" y="8" width="29" height="34" rx="2" fill="#a9773c" /><path d="M9 8v34" stroke="#7e5525" /><circle cx="21" cy="25" r="9" fill="none" stroke="#865c2c" /><path d="M15 31c1-3 3-3 4-4-3-7 5-9 5-3 0 2-1 3-1 3 3 1 4 2 4 4z" fill="#8e6330" /></g>,
  <g key="cal" transform="rotate(-4 22 25)"><rect x="8" y="12" width="31" height="31" rx="2" fill="#55585d" /><rect x="6" y="8" width="29.500" height="33" rx="1.500" fill="#fafafa" /><path d="M6 9.500Q6 8 7.500 8H34q1.500 0 1.500 1.500V18H6z" fill="#ea4a44" /><text x="20.500" y="16" textAnchor="middle" fontSize="7.500" fontFamily="Inter" fontWeight="500" fill="#fff">FEB</text><text x="20.500" y="35.500" textAnchor="middle" fontSize="18.500" fontFamily="Inter" fontWeight="300" fill="#222" textLength="22">29</text></g>,
  <g key="notes" transform="rotate(-4 22 25)"><rect x="7.500" y="8" width="28.500" height="34" fill="#fdfcf7" /><rect x="7.500" y="8" width="28.500" height="8" fill="#fccb2f" /><path d="M7.500 20h28M7.500 23.500h28M7.500 27h28M7.500 30.500h28M7.500 34h28M7.500 37.500h28" stroke="#cfcdc5" strokeWidth=".7" /></g>,
  <g key="rem" transform="rotate(-5 22 25)"><rect x="10" y="9" width="28" height="35" rx="2.500" fill="#4d4038" /><rect x="8.500" y="8" width="28" height="34.500" rx="2.500" fill="#fdfdfd" />{["#f08a3c", "#3fa4ee", "#56c64c", "#bf63dc"].map((f, i) => <g key={f}><circle cx="13.500" cy={15 + i * 6.700} r="2.500" fill={f} /><path d={`M18 ${18 + i * 6.700}h16`} stroke="#ddd" strokeWidth=".6" /></g>)}</g>,
  <g key="maps"><g transform="rotate(-4 22 25)"><rect x="6" y="9" width="30" height="33" fill="#f4efe2" /><path d="M16 9h8v11l12 9v8L16 22z" fill="#7ccb6a" /><path d="M27 9h9v14z" fill="#a4dc8f" /><path d="M6 22h6v20H6z" fill="#f6c945" /><path d="M16 9v33M25 9c0 9 4 11 11 14" fill="none" stroke="#fff" strokeWidth="2.500" /><path d="M6 14l6 5v14" stroke="#e88fa0" strokeWidth="2.500" fill="none" /></g><circle cx="14.500" cy="28.500" r="5.300" fill="#2276e3" stroke="#fff" /><path d="M12 31l2.500-6 2.500 6-2.500-1.500z" fill="#fff" /><circle cx="32.500" cy="32" r="9" fill="#f4f4f4" stroke="#bbb" strokeWidth=".6" /><circle cx="32.500" cy="32" r="5" fill="none" stroke="#888" strokeWidth=".8" /><text x="32.500" y="34" textAnchor="middle" fontSize="5.500" fontFamily="Inter" fill="#555">3D</text><path d="M32.500 24v2.500" stroke="#e33" strokeWidth="1.500" /></g>,
  <g key="photos"><circle cx="22" cy="24.700" r="18.200" fill="#f8f8f8" />{petals.map(([a, f]) => <ellipse key={a} cx="22" cy="16.500" rx="4.900" ry="7.300" fill={f} opacity=".85" transform={`rotate(${a} 22 24.700)`} />)}</g>,
  <g key="msg"><path d="M22 8c10 0 18 6 18 14.500S32 37 22 37c-2 0-4 0-5-.7-2 3-5 4.500-8.500 4.700 2-2 3-4 3-7C7 31 4 27 4 22.500 4 14 12 8 22 8z" fill="url(#ms)" /><ellipse cx="29" cy="31.500" rx="11" ry="9" fill="#f7f7f9" /><path d="M33 38l4 3.500-1-5z" fill="#f7f7f9" /><circle cx="24.500" cy="32" r="1.600" fill="#1e5788" /><circle cx="29.200" cy="32" r="1.600" fill="#1e5788" /><circle cx="34" cy="32" r="1.600" fill="#1e5788" /></g>,
  <g key="ft"><rect x="4" y="9" width="32.500" height="29" rx="5" fill="url(#ft)" /><rect x="8" y="16" width="17" height="14" rx="3" fill="#fafafa" /><path d="M26 21l6-4v12l-6-4z" fill="#fafafa" /><circle cx="31" cy="31.500" r="9" fill="#f4f6f4" /><path d="M26.500 28c0 5 4 9 8.500 9l1.500-2.500-3-2-1.500 1.200c-1.500-.7-2.500-2-3-3.200l1.300-1.200-1.800-3z" fill="#2bc04b" /></g>,
  <g key="pages" transform="rotate(-5 22 25)"><rect x="7" y="8" width="27" height="34" fill="#fbfbfb" /><path d="M7 8h31v7H7z" fill="#f08f28" /><text x="10" y="13.500" fontSize="5" fontFamily="Inter" fill="#ffe0b5">PAGES</text><rect x="11" y="18" width="12" height="9" fill="#2b84c6" /><path d="M14 19h6l-3 6z" fill="#f08f28" /><path d="M25 18h6M25 21h6M25 24h6M11 30h18M11 33h16M11 36h15" stroke="#999" strokeWidth=".8" /><path d="M36 8l3 1.500-9 27-3.500 5 .5-6z" fill="#f0a43c" stroke="#7a4c15" strokeWidth=".5" /><path d="M30 36.500l-3.500 6 .5-7z" fill="#222" /></g>,
  <g key="numbers"><path d="M4 27h36v15H4z" fill="#f4f4f4" /><path d="M4 30h4v9H4z" fill="#ddd" /><rect x="9.500" y="25.500" width="6" height="13" fill="#e0475b" /><rect x="16.800" y="18.500" width="6" height="20" fill="#f29a2b" /><rect x="24" y="8" width="6" height="30.500" fill="#3cc350" /><rect x="31.500" y="14" width="6" height="24.500" fill="#2c8deb" /></g>,
  <g key="keynote"><path d="M8 7h28l3 14H6z" fill="#28a0e8" /><rect x="12" y="9" width="20" height="10" fill="#f4fafd" /><circle cx="18" cy="14.500" r="3.500" fill="#4cae55" /><path d="M18 14.500V11a3.500 3.500 0 0 1 3.500 3.500z" fill="#e8463c" /><path d="M24 12h6M24 15h6" stroke="#6bbf5c" /><path d="M20.800 21h2.400v18h-2.400z" fill="#d8dee3" /><ellipse cx="22" cy="40.500" rx="8" ry="2.500" fill="#cdd4d9" /></g>,
  <g key="news"><circle cx="22" cy="24.700" r="18" fill="#f3485f" /><circle cx="22" cy="24.700" r="16" fill="#f9f4f5" /><path d="M13 14h5l14 15v7h-5L13 21z" fill="#ef3d55" /><path d="M24 14h8v8zM13 27l8 9h-8z" fill="#ef3d55" /></g>,
  <g key="music"><circle cx="22" cy="24.700" r="18.200" fill="url(#mu)" /><circle cx="22" cy="24.700" r="16.300" fill="#fbfafc" /><path d="M18.500 33V17l11-2.500V30.500" fill="none" stroke="url(#mn)" strokeWidth="2.200" /><path d="M18.500 17l11-2.500v3.500l-11 2.500z" fill="#e85a8e" /><ellipse cx="15.800" cy="33" rx="3.500" ry="2.800" fill="#7f62e8" /><ellipse cx="26.800" cy="30.500" rx="3.500" ry="2.800" fill="#9d6be0" /></g>,
  <g key="store"><circle cx="22.500" cy="24.700" r="18.200" fill="#e4eef8" /><circle cx="22.500" cy="24.700" r="16.700" fill="url(#as)" /><path d="M24 15L14.500 32M21 15L31 32M12 28.500h12M28 28.500h5" stroke="#fff" strokeWidth="3" strokeLinecap="round" /><Badge n="4" /></g>,
  <g key="chrome"><circle cx="22.500" cy="24.700" r="19" fill="#2fa455" /><path d="M22.500 24.700L6 15.200A19 19 0 0 1 39 15.200z" fill="#df4a3b" /><path d="M22.500 16.200h17A19 19 0 0 1 22.500 43.700l7.400-14.700z" fill="#fccb35" /><circle cx="22.500" cy="24.700" r="8.500" fill="#f6f6f6" /><circle cx="22.500" cy="24.700" r="6.700" fill="#4a84f0" /></g>,
  <g key="settings"><rect x="3.500" y="8" width="37" height="34" rx="2" fill="url(#se)" /><circle cx="22" cy="25" r="15" fill="#2c2e31" /><circle cx="22" cy="25" r="12" fill="none" stroke="#a6a9ad" strokeWidth="3.500" strokeDasharray="1.800 1" /><circle cx="22" cy="25" r="10" fill="none" stroke="#a6a9ad" strokeWidth="2" /><path d="M22 25V15M22 25l-8.500 5.500M22 25l8.500 5.500" stroke="#a6a9ad" strokeWidth="2.300" /><circle cx="22" cy="25" r="3.500" fill="#a6a9ad" /><circle cx="22" cy="25" r="1.500" fill="#2c2e31" /><Badge n="1" /></g>,
  <g key="code"><path d="M29.500 7l9.500 4.500v27L29.500 43 15 29.500 7 35.500 3.500 33l24-21.500z" fill="#1f8ad2" /><path d="M7 14.500L29.500 34V43L3.500 17.500z" fill="#2472b8" /><path d="M29.500 7l9.500 4.500v27L29.500 43z" fill="#2ba4f0" /><path d="M29.500 17.500v15L20 25z" fill="#8a664f" /></g>,
];
const mid: ReactNode[] = [
  <g key="slack"><circle cx="22" cy="24.700" r="18.500" fill="#f8f8f8" /><g transform="translate(22 24.700)"><SlackMark /></g><Badge n="•" /></g>,
  <g key="term"><rect x="4" y="9" width="36" height="32" rx="2" fill="#a7a7a7" /><rect x="5.200" y="10.200" width="33.600" height="29.600" rx="1" fill="#1d1d1f" /><text x="8" y="19" fontSize="8.500" fontFamily="Liberation Mono" fontWeight="700" fill="#fff">&gt;_</text></g>,
  <g key="xl"><rect x="13" y="9" width="27" height="32" rx="2" fill="#1a8449" /><path d="M13 9h14v10.500H13z" fill="#21a366" /><path d="M27 9h13v10.500H27z" fill="#36c481" /><path d="M27 19.500h13V30H27z" fill="#21a366" /><path d="M13 19.500h14V30H13z" fill="#107c41" /><path d="M13 30h27v9q0 2-2 2H13z" fill="#185c37" /><rect x="4" y="15.500" width="18.500" height="18.500" rx="1.500" fill="#107c41" /><text x="13.200" y="29.800" textAnchor="middle" fontSize="14" fontFamily="Inter" fontWeight="700" fill="#fff">X</text></g>,
];
const right: ReactNode[] = [
  <g key="folder"><path d="M10 6l15-1 6 6v10H10z" fill="#eee" /><path d="M20 8h5v10h-5z" fill="#555" /><path d="M4 17q0-2 2-2h11l3 3h18q2 0 2 2v18q0 2-2 2H6q-2 0-2-2z" fill="#71c6f0" /><path d="M4 22h36v17q0 1.500-2 1.500H6q-2 0-2-1.500z" fill="#84d4f8" /></g>,
  <Sheetlet key="p1" />,
  <Sheetlet key="p2" />,
  <g key="shot"><rect x="2.500" y="10" width="39.500" height="30" fill="#f4f4f6" /><rect x="2.500" y="10" width="8" height="30" fill="#42143f" /><path d="M13 14h10M13 20h13M13 30h15M13 34h11M31 14h8M31 17h6" stroke="#aaa" strokeWidth=".9" /><path d="M13 26h15" stroke="#d98ba0" /><path d="M17 18h5" stroke="#2aa76f" strokeWidth="1.500" /><circle cx="34.500" cy="37.500" r="7" fill="#f8f8f8" /><g transform="translate(34.500 37.500) scale(.42)"><SlackMark /></g></g>,
  <g key="trash"><path d="M7 11h30l-4 30q-.5 3-11 3t-11-3z" fill="#d9dadb" /><path d="M13 15l2 26M31 15l-2 26M22 16v26" stroke="#f4f4f4" strokeWidth="2.500" opacity=".7" /><ellipse cx="22" cy="11" rx="15" ry="4" fill="#b9bcbd" /><path d="M10 11l4-5 5 3 4-4 6 3 4 3-5 4-8 1z" fill="#f1f1f1" /><path d="M14 9l4 3M22 7l3 4M28 9l-3 4" stroke="#4a5560" strokeWidth="1.500" /></g>,
];

const DockIcon = ({ children, dot }: { children: ReactNode; dot?: boolean }) => (
  <svg className="shrink-0 overflow-visible" width="44.140" height="53" viewBox="0 0 44.140 53">
    {children}
    {dot && <circle cx="22" cy="49" r="2" fill="#140a05" />}
  </svg>
);

function Dock() {
  return (
    <div className="relative ml-[35px] flex h-[53px] w-[1370px] shrink-0 rounded-t-[5px] bg-linear-to-r from-[#8f6850] via-[#93694f] to-[#7c5944] pl-[3px]">
      <svg className="absolute size-0">
        <defs>
          <linearGradient id="fi" x2="0" y2="1"><stop stopColor="#25c1fb" /><stop offset="1" stopColor="#1b78e8" /></linearGradient>
          <radialGradient id="si"><stop stopColor="#7a8bd8" /><stop offset=".6" stopColor="#33306c" /><stop offset="1" stopColor="#151229" /></radialGradient>
          <linearGradient id="la" x2="0" y2="1"><stop stopColor="#bfc6ca" /><stop offset="1" stopColor="#8d969c" /></linearGradient>
          <linearGradient id="sa" x2="0" y2="1"><stop stopColor="#25baf4" /><stop offset="1" stopColor="#1b62d6" /></linearGradient>
          <linearGradient id="ml" x2="0" y2="1"><stop stopColor="#3a83d8" /><stop offset="1" stopColor="#a5d3f2" /></linearGradient>
          <linearGradient id="ms" x2="0" y2="1"><stop stopColor="#5db8f8" /><stop offset="1" stopColor="#2380ec" /></linearGradient>
          <linearGradient id="ft" x2="0" y2="1"><stop stopColor="#4fe068" /><stop offset="1" stopColor="#15b935" /></linearGradient>
          <linearGradient id="mu" x2="0" y2="1"><stop stopColor="#f4566e" /><stop offset=".5" stopColor="#c55ae0" /><stop offset="1" stopColor="#3ca9f0" /></linearGradient>
          <linearGradient id="mn" x2="0" y2="1"><stop stopColor="#f0507a" /><stop offset="1" stopColor="#5b6af0" /></linearGradient>
          <linearGradient id="as" x2="0" y2="1"><stop stopColor="#22b3f7" /><stop offset="1" stopColor="#1b62e4" /></linearGradient>
          <linearGradient id="se" x2="0" y2="1"><stop stopColor="#c7cacd" /><stop offset="1" stopColor="#6d7175" /></linearGradient>
        </defs>
      </svg>
      {left.map((g, i) => (
        <DockIcon key={i} dot={i === 0 || i === 19}>
          {g}
          {i === 2 && <rect x="1.500" y="47.500" width="41" height="3" rx="1" fill="#a87b60" stroke="#1d0f08" />}
        </DockIcon>
      ))}
      <Slot className="w-[20px]"><span className="h-[26px] w-px bg-[#5c3f2e]" /></Slot>
      {mid.map((g, i) => <DockIcon key={i} dot>{g}</DockIcon>)}
      <Slot className="w-[20px]"><span className="h-[38px] w-px bg-[#4d3426]" /></Slot>
      {right.map((g, i) => <DockIcon key={i}>{g}</DockIcon>)}
    </div>
  );
}

export default function App() {
  return (
    <div className="flex h-[900px] w-[1440px] flex-col overflow-hidden bg-linear-to-r from-[#54351f] via-[#3b2416] to-[#3d2313] font-['Inter',sans-serif]">
      <MenuBar />
      <div className="flex shrink-0 flex-col">
        <div className="flex shrink-0 flex-col bg-[#5d7287]"><TitleBar /></div>
        <div className="flex h-[105px] shrink-0 flex-col bg-linear-to-b from-[#f6f6f6] to-[#ededed]">
          <RibbonTabs />
          <Ribbon />
        </div>
        <FormulaBar />
        <Sheet />
        <Tabs />
        <StatusBar />
      </div>
      <div className="h-[12px] shrink-0" />
      <Dock />
    </div>
  );
}
